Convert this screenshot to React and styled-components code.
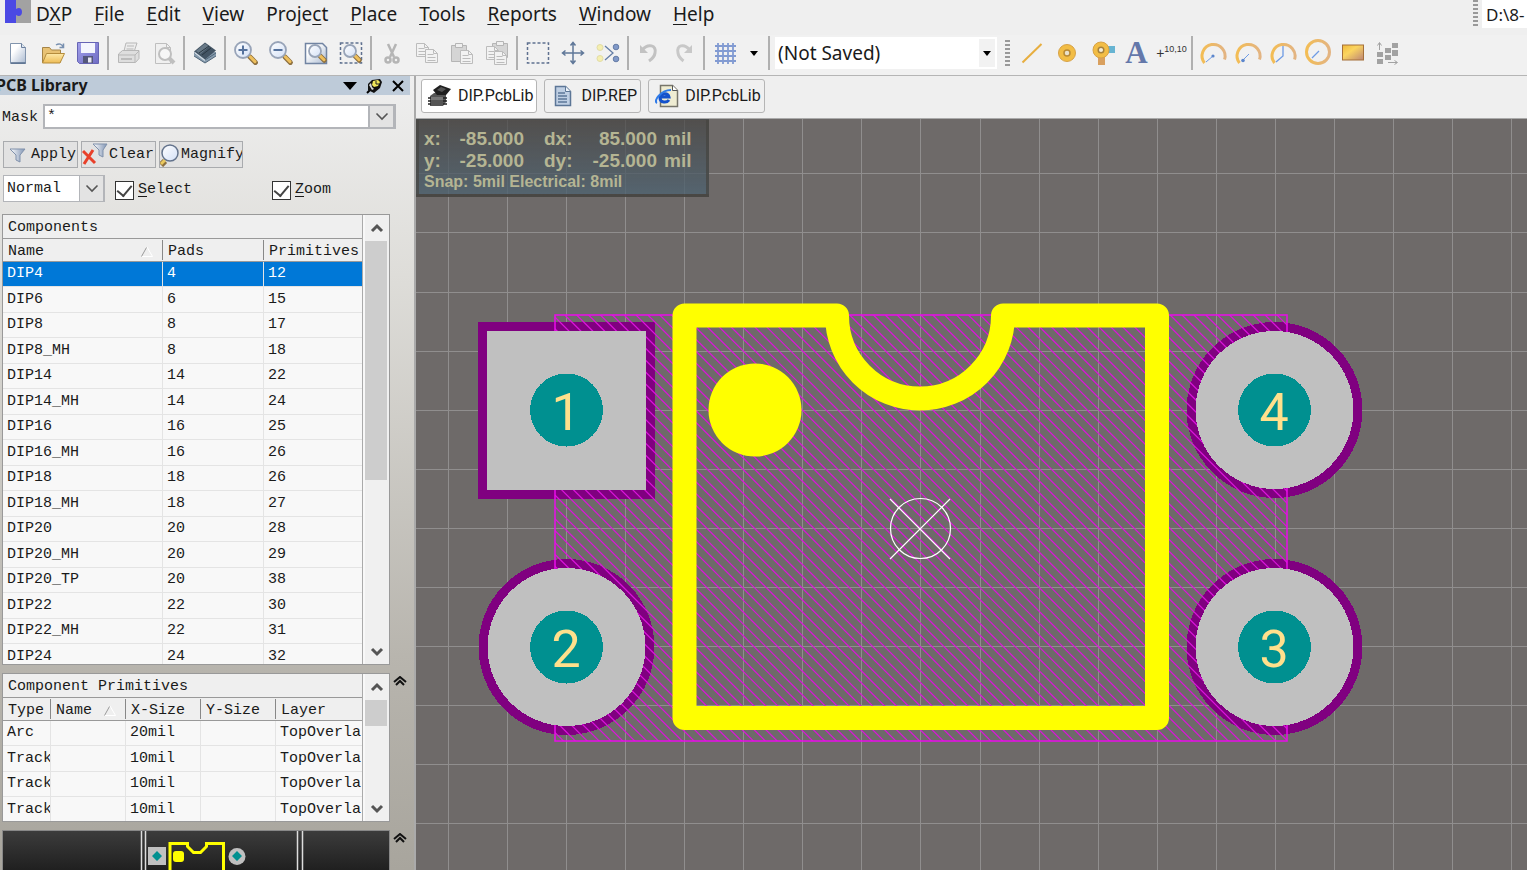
import styled, { createGlobalStyle } from "styled-components";

const menus = [
  ["D", "X", "P"],
  ["", "F", "ile"],
  ["", "E", "dit"],
  ["", "V", "iew"],
  ["Proje", "c", "t"],
  ["", "P", "lace"],
  ["", "T", "ools"],
  ["", "R", "eports"],
  ["", "W", "indow"],
  ["", "H", "elp"],
];

const components = [
  ["DIP4", 4, 12],
  ["DIP6", 6, 15],
  ["DIP8", 8, 17],
  ["DIP8_MH", 8, 18],
  ["DIP14", 14, 22],
  ["DIP14_MH", 14, 24],
  ["DIP16", 16, 25],
  ["DIP16_MH", 16, 26],
  ["DIP18", 18, 26],
  ["DIP18_MH", 18, 27],
  ["DIP20", 20, 28],
  ["DIP20_MH", 20, 29],
  ["DIP20_TP", 20, 38],
  ["DIP22", 22, 30],
  ["DIP22_MH", 22, 31],
  ["DIP24", 24, 32],
];

const primitives = [
  ["Arc", "", "20mil", "", "TopOverla"],
  ["Track", "", "10mil", "", "TopOverla"],
  ["Track", "", "10mil", "", "TopOverla"],
  ["Track", "", "10mil", "", "TopOverla"],
];

const Lens = ({ x = 9, y = 9, r = 8 }) => (
  <>
    <path
      d={`M${x + r * 0.85} ${y + r * 0.85}L${x + r * 1.55} ${y + r * 1.55}`}
      stroke="#8d7040"
      strokeWidth="5"
      strokeLinecap="round"
    />
    <path
      d={`M${x + r * 0.9} ${y + r * 0.85}L${x + r * 1.5} ${y + r * 1.45}`}
      stroke="#eebf5c"
      strokeWidth="3"
      strokeLinecap="round"
    />
    <circle cx={x} cy={y} r={r} fill="url(#glass)" stroke="#98a4b8" strokeWidth="1.8" />
  </>
);

const Page = ({ x, y, fill = "#f2f2f2", stroke = "#bcbcbc" }) => (
  <>
    <path d={`M${x} ${y}h8l4 4v9h-12z`} fill={fill} stroke={stroke} />
    <path d={`M${x + 8} ${y}v4h4M${x + 2} ${y + 5}h6M${x + 2} ${y + 8}h8M${x + 2} ${y + 11}h8`} stroke={stroke} fill="none" />
  </>
);

const icons = {
  New: (
    <>
      <path d="M4.500 2.500h11l4 4v16h-15z" fill="url(#paper)" stroke="#8194ad" />
      <path d="M15.500 2.500v4h4" fill="#dfe7f1" stroke="#6b7f9c" />
      <path d="M5 22h14.500" stroke="#566c8c" strokeWidth="1.500" />
    </>
  ),
  Open: (
    <>
      <path d="M1.500 21.500v-15h7l2 2.500h9v12z" fill="#e8c274" stroke="#a58447" />
      <path d="M1.500 22l4-9.500h18l-4.500 9.500z" fill="url(#gold)" stroke="#b58c3c" />
      <path d="M15 4c3-2 6-1 7 2M22.500 2.500v4h-4" fill="none" stroke="#7890b0" strokeWidth="1.500" />
    </>
  ),
  Save: (
    <>
      <path d="M1.500 1.500h21v21h-19l-2-2z" fill="url(#violet)" stroke="#6664b4" />
      <path d="M5 2h14v10h-14z" fill="#f4f5fd" />
      <path d="M7 15h10v7h-10z" fill="#54577a" />
      <path d="M12 16.500h3.500v5h-3.500z" fill="#e6e6f2" />
    </>
  ),
  Print: (
    <g stroke="#b7b7b7" fill="#ececec">
      <path d="M7 10l2-8h11l-3 9z" />
      <path d="M10 5h7M9.500 8h7" />
      <path d="M1.500 13l4-3.500h16.500v8l-3.500 4h-17z" fill="#dedede" />
      <path d="M1.500 14h16.500l4-4M18 14v7" fill="none" />
      <path d="M4 18h11" stroke="#999" />
    </g>
  ),
  Preview: (
    <g stroke="#bfbfbf">
      <path d="M3.500 2.500h11l4 4v16h-15z" fill="#f0f0f0" />
      <path d="M14.500 2.500v4h4" fill="none" />
      <path d="M17 17l5 5" strokeWidth="4" />
      <circle cx="13" cy="13" r="6" fill="#f6f6f6" strokeWidth="2" />
    </g>
  ),
  Board: (
    <>
      <path d="M1 11v4l11 7 11-7v-4z" fill="#879cae" />
      <path d="M1 12l11 7 11-7M1 15l11 7 11-7" stroke="#52677a" fill="none" />
      <path d="M1 10.500l11-9 11 8-11 9z" fill="#435464" />
      <path d="M3 10l9-7.500 4 3-8.500 7.500z" fill="#697a88" />
      <path d="M6 12l10-7M9 14l9-7" stroke="#2b3843" />
      <path d="M1.500 11.500l10.500 8" stroke="#d4dde6" strokeWidth="1.500" />
    </>
  ),
  "Zoom in": (
    <>
      <Lens />
      <path d="M4.500 9h9M9 4.500v9" stroke="#55729d" strokeWidth="2" />
    </>
  ),
  "Zoom out": (
    <>
      <Lens />
      <path d="M4.500 9h9" stroke="#55729d" strokeWidth="2" />
    </>
  ),
  "Fit document": (
    <>
      <path d="M1.500 2.500h17l4 4v16h-21z" fill="url(#paper)" stroke="#7184a2" strokeWidth="1.500" />
      <Lens x={11} y={10} r={6} />
    </>
  ),
  "Zoom area": (
    <>
      <rect x="1.500" y="2" width="21" height="20" fill="none" stroke="#5f7190" strokeWidth="1.500" strokeDasharray="3 2" />
      <Lens x={11} y={10} r={6} />
    </>
  ),
  Cut: (
    <g stroke="#b5b5b5" fill="none" strokeWidth="2.500">
      <path d="M8 3l6 13M16 3l-6 13" />
      <circle cx="8" cy="19" r="2.500" />
      <circle cx="16" cy="19" r="2.500" />
    </g>
  ),
  Copy: (
    <>
      <Page x={1.5} y={2.5} />
      <Page x={10.5} y={8.5} />
    </>
  ),
  Paste: (
    <>
      <path d="M1.500 4.500h15v16h-15z" fill="#d5d5d5" stroke="#b5b5b5" />
      <path d="M5.500 2.500h7v4h-7z" fill="#efefef" stroke="#b5b5b5" />
      <Page x={10.5} y={9.5} />
    </>
  ),
  "Paste special": (
    <>
      <path d="M7.500 2.500h15v14h-15z" fill="#d5d5d5" stroke="#b5b5b5" />
      <path d="M11.500 0.500h7v4h-7z" fill="#efefef" stroke="#b5b5b5" />
      <Page x={1.5} y={5.5} />
      <Page x={9.5} y={10.5} />
    </>
  ),
  "Select area": (
    <rect x="1.500" y="2" width="21" height="20" fill="none" stroke="#5f7190" strokeWidth="1.500" strokeDasharray="3 2" />
  ),
  Move: (
    <path
      d="M12 2.500v19M2.500 12h19M9.500 4.500l2.500-3 2.500 3M9.500 19.500l2.500 3 2.500-3M4.500 9.500l-3 2.500 3 2.500M19.500 9.500l3 2.500-3 2.500"
      stroke="#5f7798"
      strokeWidth="1.500"
      fill="none"
    />
  ),
  Deselect: (
    <>
      <path d="M9 5l8 7-8 7" stroke="#657ea6" strokeWidth="1.300" fill="none" />
      <circle cx="4" cy="6.500" r="3" fill="#f5efb0" stroke="#e2dca6" />
      <circle cx="4" cy="17.500" r="3" fill="#f5efb0" stroke="#e2dca6" />
      <circle cx="20" cy="6" r="2.800" fill="#8199c8" stroke="#657ca6" />
      <circle cx="20" cy="18" r="2.800" fill="#8199c8" stroke="#657ca6" />
    </>
  ),
  Undo: (
    <>
      <path d="M5 9c6-7 15-5 13 3-.5 4-3 6-6 8" stroke="#c2c2c2" strokeWidth="3" fill="none" />
      <path d="M3 4v8h8z" fill="#c2c2c2" />
    </>
  ),
  Redo: (
    <>
      <path d="M18 9c-6-7-14-5-12 3 .5 4 3 6 5.500 8" stroke="#c8c8c8" strokeWidth="3" fill="none" />
      <path d="M20 4v8h-8z" fill="#c8c8c8" />
    </>
  ),
  Grid: (
    <path d="M5 2v21M10 2v21M15 2v21M20 2v21M2 5h21M2 10h21M2 15h21M2 20h21" stroke="#829bd2" strokeWidth="1.800" />
  ),
  Line: <path d="M2.500 21.500l19-18.500" stroke="#e7ae3f" strokeWidth="2" />,
  Pad: (
    <>
      <circle cx="12" cy="12" r="8.500" fill="#f2bd45" stroke="#d7a247" />
      <circle cx="12" cy="12" r="3" fill="#e9e1cc" stroke="#b98a35" strokeWidth="1.500" />
    </>
  ),
  Via: (
    <>
      <path d="M8 14h7v10h-7z" fill="#d9a05f" />
      <path d="M16 5h9v7h-9z" fill="#67b4d2" />
      <circle cx="11" cy="9" r="8" fill="#f2bd45" stroke="#d7a247" />
      <circle cx="11" cy="9" r="2.800" fill="#f5edd8" stroke="#a5823d" strokeWidth="1.500" />
    </>
  ),
  "Arc by centre": (
    <>
      <path d="M3.500 22a11.500 11.500 0 1 1 20-3.500" stroke="url(#arc)" strokeWidth="3" fill="none" />
      <path d="M5 21l7-6" stroke="#6e9be4" />
      <circle cx="12" cy="15" r="1.600" fill="#5b86cc" />
    </>
  ),
  "Arc by edge": (
    <>
      <path d="M3.500 22a11.500 11.500 0 1 1 20-3.500" stroke="url(#arc)" strokeWidth="3" fill="none" />
      <path d="M7 19l6-6" stroke="#6e9be4" />
      <circle cx="7" cy="19.500" r="1.800" fill="#5b86cc" />
    </>
  ),
  "Arc any angle": (
    <>
      <path d="M3.500 22a11.500 11.500 0 1 1 20-3.500" stroke="url(#arc)" strokeWidth="3" fill="none" />
      <path d="M5 21l7-6v-10" stroke="#6e9be4" strokeWidth="1.300" fill="none" />
    </>
  ),
  "Full circle": (
    <>
      <circle cx="12" cy="11" r="11.500" stroke="url(#arc)" strokeWidth="3" fill="none" />
      <path d="M6 17l7-7" stroke="#6e9be4" strokeWidth="1.300" />
    </>
  ),
  Fill: <rect x="1.500" y="4" width="21" height="15" fill="url(#fill)" stroke="#a5703b" />,
  "Paste array": (
    <g fill="#a2a2a2">
      <path d="M1 11h6v5h-6zM1 18h6v5h-6zM9 7h6v5h-6zM9 14h6v5h-6zM16 2h6v5h-6zM16 9h6v6h-6z" />
      <path d="M3.500 9v-7M1.500 4.500l2-3 2 3M12 21.500h9M18.500 19.500l3 2-3 2" stroke="#a2a2a2" fill="none" />
    </g>
  ),
};

const leftTools = [
  ["New", "Open", "Save"],
  ["Print", "Preview"],
  ["Board"],
  ["Zoom in", "Zoom out", "Fit document", "Zoom area"],
  ["Cut", "Copy", "Paste", "Paste special"],
  ["Select area", "Move", "Deselect"],
  ["Undo", "Redo"],
];

const Tool = ({ name }) => (
  <ToolButton aria-label={name}>
    <Icon viewBox="0 0 24 24">{icons[name]}</Icon>
  </ToolButton>
);

const Chevron = ({ up }) => (
  <svg width="14" height="10" viewBox="0 0 14 10">
    <path d={up ? "M2 8l5-5 5 5" : "M2 2l5 5 5-5"} fill="none" stroke="#555" strokeWidth="3" />
  </svg>
);

const ThinChevron = () => (
  <svg width="14" height="9" viewBox="0 0 14 9">
    <path d="M1.500 1.500l5.500 5.500 5.500-5.500" fill="none" stroke="#555" strokeWidth="1.600" />
  </svg>
);

const Caret = () => (
  <svg width="8" height="5" viewBox="0 0 8 5">
    <path d="M0 0h8l-4 5z" fill="#000" />
  </svg>
);

const Collapse = () => (
  <svg width="14" height="10" viewBox="0 0 14 10">
    <path d="M1 6l6-5 6 5M3 9l4-4 4 4" fill="none" stroke="#111" strokeWidth="2" />
  </svg>
);

const Grid = ({ title, heads, widths, rows, height, thumb, sorted, selected }) => (
  <Frame $height={height}>
    <FrameBody>
      <FrameTitle>{title}</FrameTitle>
      <DataTable aria-label={title}>
        <colgroup>
          {widths.map((w, i) => (
            <Col key={i} $width={w} />
          ))}
        </colgroup>
        <thead>
          <tr>
            {heads.map((h, i) => (
              <Head key={h}>
                <HeadCell>
                  {h}
                  {i === sorted && (
                    <svg width="12" height="10" viewBox="0 0 12 10">
                      <path d="M6 0l5.500 9.500h-11" fill="none" stroke="#fff" />
                      <path d="M0.500 9.500l5-9" stroke="#999" />
                    </svg>
                  )}
                </HeadCell>
              </Head>
            ))}
          </tr>
        </thead>
        <tbody>
          {rows.map((row, r) => (
            <Row key={r} $selected={r === selected}>
              {row.map((cell, i) => (
                <td key={i}>{cell}</td>
              ))}
            </Row>
          ))}
        </tbody>
      </DataTable>
    </FrameBody>
    <Scrollbar>
      <ScrollButton aria-label="Scroll up">
        <Chevron up />
      </ScrollButton>
      <Track>
        <Thumb $height={thumb} />
      </Track>
      <ScrollButton aria-label="Scroll down">
        <Chevron />
      </ScrollButton>
    </Scrollbar>
  </Frame>
);

const STEP = 59.06;
const columns = Array.from({ length: 60 }, (_, i) => Math.round(448 + i * STEP) + 0.5);
const rules = Array.from({ length: 60 }, (_, i) => Math.floor(173.9 + i * STEP) + 0.5);
const hatches = Array.from({ length: 100 }, (_, i) => 137.5 + i * 11.87);

const pads = [
  { n: 1, x: 566, y: 410 },
  { n: 2, x: 566, y: 647 },
  { n: 3, x: 1274, y: 647 },
  { n: 4, x: 1274, y: 410 },
];

const Footprint = () => (
  <Drawing>
    <defs>
      <linearGradient id="paper" x1="0" y1="0" x2="1" y2="1">
        <stop offset="0.300" stopColor="#fff" />
        <stop offset="1" stopColor="#a9b9d0" />
      </linearGradient>
      <linearGradient id="gold" x1="0" y1="0" x2="0" y2="1">
        <stop offset="0" stopColor="#fde9a8" />
        <stop offset="1" stopColor="#eebc56" />
      </linearGradient>
      <linearGradient id="violet" x1="0" y1="0" x2="1" y2="1">
        <stop offset="0" stopColor="#a3a1ea" />
        <stop offset="1" stopColor="#6f6cc4" />
      </linearGradient>
      <linearGradient id="glass" x1="0" y1="0" x2="1" y2="1">
        <stop offset="0" stopColor="#fff" />
        <stop offset="1" stopColor="#d3e0f6" />
      </linearGradient>
      <linearGradient id="funnel" x1="0" y1="0" x2="1" y2="0">
        <stop offset="0" stopColor="#fff" />
        <stop offset="1" stopColor="#7f93b3" />
      </linearGradient>
      <linearGradient id="arc" x1="0" y1="0" x2="1" y2="0">
        <stop offset="0" stopColor="#f3bd55" />
        <stop offset="1" stopColor="#e3b482" />
      </linearGradient>
      <linearGradient id="fill" x1="0" y1="0" x2="1" y2="1">
        <stop offset="0" stopColor="#f0b93a" />
        <stop offset="0.400" stopColor="#fbd560" />
        <stop offset="1" stopColor="#bd8577" />
      </linearGradient>
      <clipPath id="courtyard">
        <rect x="555" y="315" width="732" height="426" />
      </clipPath>
    </defs>
    <g transform="translate(-416 -119)">
      <g stroke="#908e8e" shapeRendering="crispEdges">
        {columns.map((x) => (
          <path key={x} d={`M${x} 0V4000`} />
        ))}
        {rules.map((y) => (
          <path key={y} d={`M0 ${y}H4000`} />
        ))}
      </g>

      {/* solder mask */}
      <g fill="#800080" shapeRendering="crispEdges">
        <rect x="478" y="322" width="177" height="177" />
        {pads.slice(1).map((p) => (
          <circle key={p.n} cx={p.x + 0.5} cy={p.y} r="88" />
        ))}
      </g>

      <g stroke="#dc14dc" fill="none" clipPath="url(#courtyard)">
        {hatches.map((x) => (
          <path key={x} d={`M${x} 315l430 430`} strokeWidth="1.200" />
        ))}
      </g>
      <rect x="555" y="315" width="732" height="426" fill="none" stroke="#ea0cea" strokeWidth="1.500" />

      <g fill="#c0c0c0" shapeRendering="crispEdges">
        <rect x="487" y="331" width="159" height="159" />
        {pads.slice(1).map((p) => (
          <circle key={p.n} cx={p.x + 0.5} cy={p.y} r="79" />
        ))}
      </g>
      {pads.map((p) => (
        <g key={p.n}>
          <circle cx={p.x + 0.5} cy={p.y} r="36.500" fill="#009090" shapeRendering="crispEdges" />
          <PadNumber x={p.x} y={p.y + 20}>
            {p.n}
          </PadNumber>
        </g>
      ))}

      {/* top overlay */}
      <path
        d="M837 315.500H684.500V718H1157V315.500H1003A83 83 0 0 1 837 315.500"
        fill="none"
        stroke="#ff0"
        strokeWidth="24"
        strokeLinejoin="round"
        strokeLinecap="round"
      />
      <circle cx="755" cy="410" r="46.500" fill="#ff0" />

      <g stroke="#fff" fill="none" strokeWidth="1.200">
        <circle cx="920.500" cy="528.500" r="30" />
        <path d="M890 499l60 60M950 499l-60 60" />
      </g>
    </g>
  </Drawing>
);

const App = () => (
  <Window>
    <GlobalStyle />
    <MenuBar>
      <svg width="26" height="24" viewBox="0 0 26 24">
        <path d="M0 0h26v23h-26z" fill="#a2a2a2" />
        <path d="M0 0h11v9c3-2 6-1 6 3s-3 5-6 3v8h-11z" fill="#4b49e4" />
      </svg>
      <Menus>
        {menus.map(([a, b, c]) => (
          <MenuItem key={a + b + c}>
            {a}
            <u>{b}</u>
            {c}
          </MenuItem>
        ))}
      </Menus>
      <Grip />
      <PathBox aria-label="Path" defaultValue="D:\8-" />
    </MenuBar>

    <Toolbar>
      {leftTools.map((group, i) => (
        <ToolGroup key={i}>
          {group.map((name) => (
            <Tool key={name} name={name} />
          ))}
          <Separator />
        </ToolGroup>
      ))}
      <ToolGroup>
        <Tool name="Grid" />
        <ArrowButton aria-label="Grid options">
          <Caret />
        </ArrowButton>
        <Separator />
      </ToolGroup>
      <Combo>
        <ComboSelect aria-label="Filter">
          <option>(Not Saved)</option>
        </ComboSelect>
        <ComboArrow>
          <Caret />
        </ComboArrow>
      </Combo>
      <Grip />
      <ToolGroup>
        {["Line", "Pad", "Via"].map((name) => (
          <Tool key={name} name={name} />
        ))}
        <ToolButton aria-label="String">
          <Letter>A</Letter>
        </ToolButton>
        <ToolButton aria-label="Coordinate">
          <Coord>
            +<sup>10,10</sup>
          </Coord>
        </ToolButton>
        <Separator />
        {["Arc by centre", "Arc by edge", "Arc any angle", "Full circle", "Fill", "Paste array"].map((name) => (
          <Tool key={name} name={name} />
        ))}
      </ToolGroup>
    </Toolbar>

    <Main>
      <Panel>
        <PanelHeader>
          <PanelTitle>PCB Library</PanelTitle>
          <PanelButton aria-label="Panel menu">
            <svg width="14" height="8" viewBox="0 0 14 8">
              <path d="M0 0h14l-7 8z" fill="#000" />
            </svg>
          </PanelButton>
          <PanelButton aria-label="Pin panel">
            <svg width="16" height="16" viewBox="0 0 16 16">
              <path d="M1 15l4-4" stroke="#000" strokeWidth="2" />
              <path d="M2 6l4-4 8-1 2 3-2 6-6 5-6-3z" fill="#111" />
              <path d="M7 3l5-1 2 2-2 4-4 1-2-2z" fill="#efe65a" />
              <path d="M3 7l2-2 1 4 2 2-2 1z" fill="#d8d8d8" />
              <path d="M10 3v3h3" stroke="#222" fill="none" />
            </svg>
          </PanelButton>
          <PanelButton aria-label="Close panel">
            <svg width="12" height="12" viewBox="0 0 12 12">
              <path d="M1 1l10 10M11 1l-10 10" stroke="#000" strokeWidth="2" />
            </svg>
          </PanelButton>
        </PanelHeader>

        <MaskRow>
          <label htmlFor="mask">Mask</label>
          <MaskField>
            <input id="mask" defaultValue="*" />
            <DropButton aria-label="Mask history">
              <ThinChevron />
            </DropButton>
          </MaskField>
        </MaskRow>

        <ButtonRow>
          <PushButton $width={75} $gap={5}>
            <svg width="17" height="17" viewBox="0 0 17 17">
              <path d="M1 3h15l-5 6v7l-4-2v-5z" fill="url(#funnel)" stroke="#8091ab" />
            </svg>
            Apply
          </PushButton>
          <PushButton $width={75}>
            <svg width="27" height="24" viewBox="0 0 27 24">
              <path d="M11 1h14l-4 6v7l-4-2v-5z" fill="url(#funnel)" stroke="#8091ab" />
              <path d="M1 8l12 12M11 7l-9 14" stroke="#e8402a" strokeWidth="3" />
            </svg>
            Clear
          </PushButton>
          <PushButton $width={84}>
            <svg width="21" height="24" viewBox="0 0 21 24">
              <path d="M1 22l4-4" stroke="#8d7040" strokeWidth="6" />
              <path d="M1 21l4-4" stroke="#eac95e" strokeWidth="3" />
              <circle cx="10" cy="10" r="8" fill="url(#glass)" stroke="#63738c" strokeWidth="1.500" />
            </svg>
            Magnify
          </PushButton>
        </ButtonRow>

        <OptionRow>
          <ModeField>
            <select aria-label="Display mode">
              <option>Normal</option>
            </select>
            <DropIcon>
              <ThinChevron />
            </DropIcon>
          </ModeField>
          <Check>
            <input type="checkbox" defaultChecked />
            <span>
              <u>S</u>elect
            </span>
          </Check>
          <Check>
            <input type="checkbox" defaultChecked />
            <span>
              <u>Z</u>oom
            </span>
          </Check>
        </OptionRow>

        <Section>
          <Grid
            title="Components"
            heads={["Name", "Pads", "Primitives"]}
            widths={[160, 101, 99]}
            rows={components}
            height={451}
            thumb={239}
            sorted={0}
            selected={0}
          />
        </Section>
        <Section>
          <Grid
            title="Component Primitives"
            heads={["Type", "Name", "X-Size", "Y-Size", "Layer"]}
            widths={[48, 75, 75, 75, 87]}
            rows={primitives}
            height={149}
            thumb={26}
            sorted={1}
          />
          <CollapseButton aria-label="Collapse primitives">
            <Collapse />
          </CollapseButton>
        </Section>
        <Section>
          <Preview>
            <svg width="388" height="100" viewBox="0 0 388 100">
              <path d="M138.500 0v100M142.500 0v100M294.500 0v100M299.500 0v100" stroke="#ddd" strokeWidth="1.500" />
              <path d="M145 16h18v18h-18z" fill="#c0c0c0" />
              <circle cx="234" cy="25.500" r="8.500" fill="#c0c0c0" />
              <path d="M154 20l5 5-5 5-5-5zM234 20l5 5-5 5-5-5z" fill="#009090" />
              <rect x="170" y="20" width="11" height="11" rx="3" fill="#ff0" />
              <path d="M167 70V12.500h17.500v3l6 6h7l6-6v-3h17V70z" fill="none" stroke="#ff0" strokeWidth="3" />
            </svg>
          </Preview>
          <CollapseButton aria-label="Collapse preview">
            <Collapse />
          </CollapseButton>
        </Section>
      </Panel>

      <Editor>
        <Tabs>
          <Tab $active>
            <svg width="24" height="24" viewBox="0 0 24 24">
              <path d="M2 12l4-3h12v9l-3 4h-13z" fill="#555" />
              <path d="M0 14h3M0 17h3M0 20h3M15 14h4M15 17h4M15 20h4" stroke="#222" strokeWidth="1.500" />
              <path d="M5 6l7-5 11 4-5 6h-9z" fill="#1f1f1f" />
              <path d="M9 6l4-3 5 2-4 3z" fill="#555" />
              <path d="M3 13h12v3h-12z" fill="#777" />
            </svg>
            DIP.PcbLib
          </Tab>
          <Tab>
            <svg width="24" height="24" viewBox="0 0 24 24">
              <path d="M4.500 2.500h10l5 5v14h-15z" fill="#bfcfe3" stroke="#5c7696" strokeWidth="1.500" />
              <path d="M14.500 2.500v5h5" fill="#eef3f9" stroke="#5c7696" />
              <path d="M7 9h7M7 12h9M7 15h9M7 18h9" stroke="#5d7899" strokeWidth="1.300" />
            </svg>
            DIP.REP
          </Tab>
          <Tab>
            <svg width="24" height="24" viewBox="0 0 24 24">
              <path d="M5.500 1.500h12l5 5v16h-17z" fill="#efecd2" stroke="#77756a" strokeWidth="1.500" />
              <path d="M17.500 1.500v5h5" fill="#fff" stroke="#555" />
              <path d="M14 16c-2 3-9 3-9-2s8-6 9-1h-8" stroke="#1452cc" strokeWidth="3" fill="none" />
              <path d="M2 19c-4-2 4-13 14-13" stroke="#2f7be8" strokeWidth="2" fill="none" />
            </svg>
            DIP.PcbLib
          </Tab>
        </Tabs>
        <Canvas>
          <Footprint />
          <HeadsUp>
            <Readout>
              <span>x:</span>
              <Value>-85.000</Value>
              <span>dx:</span>
              <Value>85.000</Value>
              <span>mil</span>
              <span>y:</span>
              <Value>-25.000</Value>
              <span>dy:</span>
              <Value>-25.000</Value>
              <span>mil</span>
            </Readout>
            <Snap>Snap: 5mil Electrical: 8mil</Snap>
          </HeadsUp>
        </Canvas>
      </Editor>
    </Main>
  </Window>
);

const GlobalStyle = createGlobalStyle`
  * {
    box-sizing: border-box;
  }
  body {
    margin: 0;
    overflow: hidden;
    color: #1a1a1a;
    font-family: "Noto Sans", sans-serif;
  }
  button, input, select {
    font: inherit;
    color: inherit;
    margin: 0;
    padding: 0;
    border: 0;
    border-radius: 0;
    outline: 0;
    background: none;
  }
  svg {
    display: block;
    flex-shrink: 0;
  }
  u {
    text-underline-offset: 3px;
  }
`;

const Window = styled.div`
  display: flex;
  flex-direction: column;
  height: 100vh;
  background: #efefef;
`;

const MenuBar = styled.header`
  display: flex;
  height: 35px;
  padding-left: 5px;
  font-size: 19px;
`;

const Menus = styled.nav`
  display: flex;
  flex: 1;
  gap: 22px;
  height: 28px;
  padding-left: 5px;
`;

const MenuItem = styled.button`
  line-height: 28px;
  white-space: pre;
`;

const Grip = styled.div`
  width: 5px;
  height: 26px;
  margin: 0 4px;
  background: repeating-linear-gradient(#999 0 2px, transparent 2px 4px);
`;

const PathBox = styled.input`
  width: 45px;
  height: 28px;
  padding-left: 4px;
  background: #fff;
  font-size: 17px;
`;

const Toolbar = styled.div`
  display: flex;
  align-items: center;
  height: 41px;
  padding-bottom: 4px;
  border-bottom: 1px solid #b5b5b5;
  background: #f1f1f1;
`;

const ToolGroup = styled.div`
  display: flex;
  align-items: center;
`;

const ToolButton = styled.button`
  display: flex;
  align-items: center;
  justify-content: center;
  width: 35px;
  height: 34px;
`;

const ArrowButton = styled(ToolButton)`
  width: 24px;
`;

const Icon = styled.svg`
  width: 24px;
  height: 24px;
  overflow: visible;
  fill: none;
`;

const Separator = styled.div`
  width: 2px;
  height: 34px;
  margin: 0 2px;
  background: #b0b0b0;
`;

const Combo = styled.div`
  position: relative;
  width: 222px;
  height: 32px;
  margin: 0 4px 0 3px;
  background: #fff;
`;

const ComboSelect = styled.select`
  width: 100%;
  height: 100%;
  padding-left: 3px;
  appearance: none;
  font-size: 19px;
`;

const ComboArrow = styled.span`
  position: absolute;
  top: 2px;
  right: 2px;
  display: flex;
  align-items: center;
  justify-content: center;
  width: 16px;
  height: 28px;
  background: #f2f2f2;
  pointer-events: none;
`;

const Letter = styled.span`
  color: #6478aa;
  font: bold 31px/34px "Liberation Serif", serif;
`;

const Coord = styled.span`
  color: #333;
  font: 14px/24px "Liberation Sans", sans-serif;
  sup {
    font-size: 9px;
    line-height: 1;
  }
`;

const Main = styled.main`
  display: flex;
  flex: 1;
  min-height: 0;
`;

const Panel = styled.aside`
  width: 416px;
  flex-shrink: 0;
  overflow: hidden;
  border-right: 2px solid #aaa;
  background: linear-gradient(#efefef, #deddd9 25%, #b8b5ae 73%, #a8a59d);
  font: 15px/20px "Liberation Mono", monospace;
`;

const PanelHeader = styled.div`
  display: flex;
  align-items: center;
  width: 410px;
  height: 19px;
  background: #becbd9;
`;

const PanelTitle = styled.h1`
  flex: 1;
  margin: 0;
  text-indent: -4px;
  font: bold 16px/19px "Noto Sans", sans-serif;
`;

const PanelButton = styled.button`
  display: flex;
  align-items: center;
  justify-content: center;
  width: 24px;
  height: 19px;
`;

const MaskRow = styled.div`
  display: flex;
  align-items: center;
  gap: 5px;
  padding: 9px 18px 12px 2px;
  label {
    padding-top: 3px;
  }
`;

const MaskField = styled.div`
  display: flex;
  flex: 1;
  height: 25px;
  border: 2px solid #b3b5b9;
  background: #fff;
  input {
    flex: 1;
    min-width: 0;
    padding-left: 2px;
  }
`;

const DropButton = styled.button`
  display: flex;
  align-items: center;
  justify-content: center;
  width: 26px;
  border: 2px solid #b3b5b9;
  border-width: 0 1px 0 2px;
  background: #e3e3e3;
`;

const ButtonRow = styled.div`
  display: flex;
  gap: 3px;
  padding-left: 3px;
`;

const PushButton = styled.button`
  display: flex;
  align-items: center;
  gap: ${(props) => props.$gap || 0}px;
  width: ${(props) => props.$width}px;
  height: 27px;
  padding-left: ${(props) => props.$gap || 0}px;
  overflow: hidden;
  border: 1px solid #a9abae;
  background: #e2e2e2;
`;

const OptionRow = styled.div`
  display: flex;
  align-items: center;
  padding: 7px 0 12px 3px;
`;

const ModeField = styled.div`
  position: relative;
  flex-shrink: 0;
  width: 102px;
  height: 27px;
  margin-right: 10px;
  border: 2px solid #b3b5b9;
  border-width: 1px 2px 1px 1px;
  background: #fff;
  select {
    width: 100%;
    height: 100%;
    padding-left: 3px;
    appearance: none;
  }
`;

const DropIcon = styled.span`
  position: absolute;
  top: 0;
  right: 0;
  display: flex;
  align-items: center;
  justify-content: center;
  width: 24px;
  height: 25px;
  border-left: 1px solid #b3b5b9;
  background: #e3e3e3;
  pointer-events: none;
`;

const Check = styled.label`
  display: flex;
  flex-shrink: 0;
  align-items: center;
  gap: 4px;
  width: 157px;
  padding-top: 3px;
  &:last-child {
    width: auto;
  }
  input {
    display: flex;
    justify-content: center;
    width: 19px;
    height: 19px;
    border: 1px solid #333;
    background: #fff;
    appearance: none;
  }
  input:checked::after {
    content: "";
    width: 7px;
    height: 12px;
    border: solid #444;
    border-width: 0 2px 2px 0;
    transform: rotate(40deg);
  }
`;

const Section = styled.section`
  display: flex;
  align-items: flex-start;
  padding: 0 0 8px 2px;
`;

const Frame = styled.div`
  display: flex;
  width: 388px;
  height: ${(props) => props.$height}px;
  overflow: hidden;
  border: 1px solid #999;
  background: #f8f8f8;
`;

const FrameBody = styled.div`
  width: 360px;
  overflow: hidden;
  border-right: 1px solid #aaa;
`;

const FrameTitle = styled.h2`
  height: 24px;
  margin: 0;
  padding-left: 5px;
  border-bottom: 1px solid #999;
  background: #efefef;
  font: inherit;
  line-height: 26px;
`;

const DataTable = styled.table`
  width: 100%;
  table-layout: fixed;
  border-spacing: 0;
`;

const Col = styled.col`
  width: ${(props) => props.$width}px;
`;

const Head = styled.th`
  height: 23px;
  padding: 0;
  border-bottom: 1px solid #999;
  background: #efefef;
  font-weight: normal;
  text-align: left;
`;

const HeadCell = styled.div`
  display: flex;
  align-items: center;
  justify-content: space-between;
  height: 20px;
  padding: 3px 9px 0 5px;
  white-space: nowrap;
  th:not(:last-child) & {
    border-right: 1px solid #888;
  }
`;

const Row = styled.tr`
  height: 25px;
  color: ${(props) => (props.$selected ? "#fff" : "#1a1a1a")};
  background: ${(props) => (props.$selected ? "#0078d7" : "#f8f8f8")};
  &:nth-child(even) {
    height: 26px;
  }
  td {
    padding: 0 1px 0 4px;
    overflow: hidden;
    border-right: 1px solid #e4e4e4;
    border-bottom: 1px solid #e4e4e4;
    white-space: nowrap;
  }
`;

const Scrollbar = styled.div`
  display: flex;
  flex-direction: column;
  flex: 1;
  margin-left: 2px;
  background: #f0f0f0;
`;

const ScrollButton = styled.button`
  display: flex;
  align-items: center;
  justify-content: center;
  height: 25px;
`;

const Track = styled.div`
  flex: 1;
  padding-top: 1px;
`;

const Thumb = styled.div`
  width: 22px;
  height: ${(props) => props.$height}px;
  background: #cdcdcd;
`;

const CollapseButton = styled.button`
  width: 20px;
  height: 14px;
  padding: 2px 0 0 3px;
`;

const Preview = styled.div`
  width: 388px;
  height: 100px;
  overflow: hidden;
  border: 1px solid #888;
  background: linear-gradient(#3c3c3c, #1c1c1c 45%);
`;

const Editor = styled.div`
  display: flex;
  flex-direction: column;
  flex: 1;
  min-width: 0;
`;

const Tabs = styled.div`
  display: flex;
  gap: 7px;
  height: 43px;
  padding: 3px 5px 0;
  border-bottom: 1px solid #aaa;
`;

const Tab = styled.button`
  display: flex;
  align-items: center;
  gap: 6px;
  height: 34px;
  padding: 0 3px 0 6px;
  border: 1px solid #b5b5b5;
  border-radius: 3px;
  background: ${(props) => (props.$active ? "#fff" : "#f0f0f0")};
  font: 16px/20px Roboto, sans-serif;
`;

const Canvas = styled.div`
  position: relative;
  flex: 1;
  min-height: 0;
  overflow: hidden;
  background: #6e6a69;
`;

const Drawing = styled.svg`
  width: 100%;
  height: 100%;
`;

const PadNumber = styled.text`
  fill: #ffe08c;
  font: 52px Roboto, sans-serif;
  text-anchor: middle;
`;

const HeadsUp = styled.div`
  position: absolute;
  top: 0;
  left: 0;
  width: 293px;
  height: 78px;
  padding: 8px 5px;
  border: 3px solid rgba(70, 68, 64, 0.7);
  border-top-width: 1px;
  background: linear-gradient(rgba(70, 68, 66, 0.7), rgba(78, 98, 112, 0.8));
  color: #b5b593;
  font-family: "Liberation Sans", sans-serif;
  font-weight: bold;
`;

const Readout = styled.div`
  display: grid;
  grid-template-columns: 30px 70px 60px 73px 40px;
  font-size: 19px;
  line-height: 22px;
  span:nth-child(5n + 3) {
    padding-left: 20px;
  }
  span:nth-child(5n) {
    padding-left: 7px;
  }
`;

const Value = styled.span`
  text-align: right;
`;

const Snap = styled.div`
  font-size: 16px;
  line-height: 20px;
`;

export default App;
